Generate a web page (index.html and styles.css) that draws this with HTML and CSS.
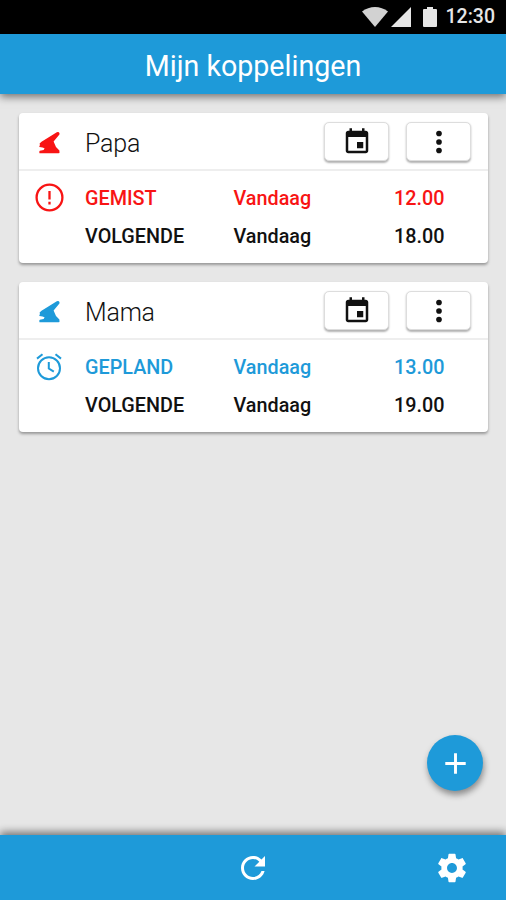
FILE: index.html
```html
<!doctype html>
<html lang="nl">
  <head>
    <meta charset="utf-8" />
    <title>Mijn koppelingen</title>
    <link rel="stylesheet" href="styles.css">
  </head>

  <body>
    <div class="statusbar">
      <svg class="wifi" viewBox="0 0 26 20"><path d="M0 4.500C7.500-1.500 18.500-1.500 26 4.500L13 20z" /></svg>
      <svg class="signal" viewBox="0 0 20 20"><path d="M0 20L20 0v20z" /></svg>
      <svg class="battery" viewBox="0 0 14 20"><path d="M1 2h3V0h6v2h3q1 0 1 1v16q0 1-1 1H1q-1 0-1-1V3q0-1 1-1z" /></svg>
      <span class="clock">12:30</span>
    </div>

    <header class="header">
      <h1>Mijn koppelingen</h1>
    </header>

    <main class="content">
      <section class="card">
        <div class="card_header">
          <svg class="logo missed" viewBox="0 0 22 24"><path d="M18.800 2.300Q20.800 1.500 21.500 3.200Q21.800 4.500 20.600 5.500L15.600 11.500L18 17L21.400 20.500Q22 23.200 20.500 23.200H1.500Q.8 21.500 1.800 20.800L5.600 20L6.600 18.300L4.500 17.500L1.500 17Q.8 16 2 15.300L1.600 13.500L3.500 11.700Z" /></svg>
          <h2>Papa</h2>
          <button class="card_button">
            <svg class="icon_event" viewBox="0 0 24 24"><path d="M17 12h-5v5h5v-5zM16 1v2H8V1H6v2H5c-1.110 0-1.990.9-1.990 2L3 19c0 1.100.89 2 2 2h14c1.100 0 2-.9 2-2V5c0-1.100-.9-2-2-2h-1V1h-2zm3 18H5V8h14v11z" /></svg>
          </button>
          <button class="card_button">
            <svg class="icon_more" viewBox="0 0 24 24"><circle cx="12" cy="6" r="2" /><circle cx="12" cy="12" r="2" /><circle cx="12" cy="18" r="2" /></svg>
          </button>
        </div>
        <div class="card_body">
          <div class="row missed">
            <svg class="icon_state" viewBox="0 0 30 30"><circle cx="14.500" cy="14.500" r="12.900" /><path d="M14.500 8v8.500M14.500 18.800v2.700" /></svg>
            <span>GEMIST</span>
            <span>Vandaag</span>
            <span class="time">12.00</span>
          </div>
          <div class="row">
            <span class="label">VOLGENDE</span>
            <span>Vandaag</span>
            <span class="time">18.00</span>
          </div>
        </div>
      </section>

      <section class="card">
        <div class="card_header">
          <svg class="logo planned" viewBox="0 0 22 24"><path d="M18.800 2.300Q20.800 1.500 21.500 3.200Q21.800 4.500 20.600 5.500L15.600 11.500L18 17L21.400 20.500Q22 23.200 20.500 23.200H1.500Q.8 21.500 1.800 20.800L5.600 20L6.600 18.300L4.500 17.500L1.500 17Q.8 16 2 15.300L1.600 13.500L3.500 11.700Z" /></svg>
          <h2>Mama</h2>
          <button class="card_button">
            <svg class="icon_event" viewBox="0 0 24 24"><path d="M17 12h-5v5h5v-5zM16 1v2H8V1H6v2H5c-1.110 0-1.990.9-1.990 2L3 19c0 1.100.89 2 2 2h14c1.100 0 2-.9 2-2V5c0-1.100-.9-2-2-2h-1V1h-2zm3 18H5V8h14v11z" /></svg>
          </button>
          <button class="card_button">
            <svg class="icon_more" viewBox="0 0 24 24"><circle cx="12" cy="6" r="2" /><circle cx="12" cy="12" r="2" /><circle cx="12" cy="18" r="2" /></svg>
          </button>
        </div>
        <div class="card_body">
          <div class="row planned">
            <svg class="icon_state alarm" viewBox="0 0 30 30"><circle cx="14" cy="16.300" r="11" /><path d="M13.800 10v6.500l5 3.200M2 6.600L7.500 2.200M20.500 2.200l5.500 4.400" /></svg>
            <span>GEPLAND</span>
            <span>Vandaag</span>
            <span class="time">13.00</span>
          </div>
          <div class="row">
            <span class="label">VOLGENDE</span>
            <span>Vandaag</span>
            <span class="time">19.00</span>
          </div>
        </div>
      </section>
    </main>

    <button class="fab">
      <svg viewBox="0 0 24 24"><path d="M19 13h-6v6h-2v-6H5v-2h6V5h2v6h6v2z" /></svg>
    </button>

    <footer class="footer">
      <span></span>
      <svg class="icon_refresh" viewBox="0 0 24 24"><path d="M17.650 6.350C16.200 4.900 14.210 4 12 4c-4.420 0-7.990 3.580-7.990 8s3.570 8 7.990 8c3.730 0 6.840-2.550 7.730-6h-2.080c-.82 2.330-3.040 4-5.650 4-3.310 0-6-2.690-6-6s2.690-6 6-6c1.660 0 3.140.69 4.220 1.780L13 11h7V4l-2.350 2.350z" /></svg>
      <svg class="icon_settings" viewBox="0 0 24 24"><path d="M19.430 12.980c.04-.32.07-.64.07-.98s-.03-.66-.07-.98l2.110-1.650c.19-.15.24-.42.12-.64l-2-3.460c-.12-.22-.39-.3-.61-.22l-2.490 1c-.52-.4-1.080-.73-1.690-.98l-.38-2.650C14.460 2.180 14.250 2 14 2h-4c-.25 0-.46.18-.49.42l-.38 2.650c-.61.25-1.170.59-1.690.98l-2.490-1c-.23-.09-.49 0-.61.22l-2 3.460c-.13.22-.07.49.12.64l2.110 1.650c-.04.32-.07.65-.07.98s.03.66.07.98l-2.110 1.650c-.19.15-.24.42-.12.64l2 3.460c.12.22.39.3.61.22l2.490-1c.52.4 1.080.73 1.690.98l.38 2.650c.03.24.24.42.49.42h4c.25 0 .46-.18.49-.42l.38-2.650c.61-.25 1.170-.59 1.690-.98l2.490 1c.23.09.49 0 .61-.22l2-3.460c.12-.22.07-.49-.12-.64l-2.110-1.650zM12 15.500c-1.930 0-3.500-1.570-3.500-3.500s1.570-3.500 3.500-3.500 3.500 1.570 3.500 3.500-1.570 3.500-3.500 3.500z" /></svg>
    </footer>
  </body>
</html>
```
FILE: styles.css
```css
* {
  box-sizing: border-box;
}

body {
  display: flex;
  flex-direction: column;
  height: 100vh;
  margin: 0;
  overflow: hidden;
  background-color: #e7e7e7;
  font-family: Roboto, sans-serif;
}

svg {
  display: block;
  flex: none;
  fill: currentColor;
}

.statusbar {
  display: flex;
  flex: none;
  align-items: center;
  justify-content: flex-end;
  height: 34px;
  padding-right: 11px;
  background-color: #000;
  color: #e6e6e6;
}

.wifi {
  width: 26px;
  height: 20px;
  margin-right: 3px;
  color: #d2d2d2;
}

.signal {
  width: 20px;
  height: 20px;
  margin-right: 12px;
}

.battery {
  width: 14px;
  height: 20px;
  margin-right: 9px;
}

.clock {
  font-size: 19.500px;
  font-weight: 500;
  line-height: 36px;
}

.header {
  display: flex;
  flex: none;
  align-items: center;
  justify-content: center;
  height: 60px;
  padding-top: 4px;
  background-color: #1e9ad9;
  box-shadow: 0 3px 8px rgba(0, 0, 0, 0.5);
  color: #fff;
}

h1 {
  margin: 0;
  font-size: 28.600px;
  font-weight: 400;
}

.content {
  display: flex;
  flex: 1;
  flex-direction: column;
  gap: 19px;
  padding: 19px 18px 0 19px;
}

.card {
  height: 150px;
  border-radius: 4px;
  background-color: #fff;
  box-shadow: 0 2px 3px rgba(0, 0, 0, 0.35);
}

.card_header {
  display: flex;
  align-items: center;
  height: 58px;
  padding: 1px 17px 0 19px;
  border-bottom: 2px solid #eee;
}

.logo {
  width: 22px;
  height: 24px;
}

h2 {
  flex: 1;
  margin: 3px 0 0 25px;
  color: #111;
  font-size: 25px;
  font-weight: 300;
  letter-spacing: -0.200px;
}

.card_button {
  display: flex;
  align-items: center;
  justify-content: center;
  width: 65px;
  height: 39px;
  margin-left: 17px;
  padding: 0;
  border: 1px solid #ddd;
  border-radius: 5px;
  background-color: #fff;
  box-shadow: 0 1.500px 2px rgba(0, 0, 0, 0.3);
  color: #111;
}

.icon_event {
  width: 30px;
  height: 30px;
}

.icon_more {
  width: 34px;
  height: 34px;
}

.card_body {
  padding-top: 8px;
}

.row {
  display: grid;
  grid-template-columns: 50px 148.500px 121px 90px;
  align-items: center;
  height: 38.500px;
  padding-left: 16px;
  color: #111;
  font-size: 19.800px;
  font-weight: 500;
}

.row .label {
  grid-column: 2;
}

.time {
  text-align: right;
}

.missed {
  color: #f81414;
}

.planned {
  color: #1e9ad9;
}

.icon_state {
  width: 30px;
  height: 30px;
  fill: none;
  stroke: currentColor;
  stroke-width: 2.300;
}

.alarm {
  stroke-width: 2;
}

.fab {
  position: absolute;
  right: 23px;
  bottom: 109px;
  display: flex;
  align-items: center;
  justify-content: center;
  width: 56px;
  height: 56px;
  padding: 0;
  border: none;
  border-radius: 50%;
  background-color: #1e9ad9;
  box-shadow: 1px 4px 6px rgba(0, 0, 0, 0.4);
  color: #fff;
}

.fab svg {
  width: 35px;
  height: 35px;
}

.footer {
  display: grid;
  flex: none;
  grid-template-columns: 1fr 36px 1fr;
  align-items: center;
  height: 65px;
  background-color: #1e9ad9;
  box-shadow: 0 -3px 8px rgba(0, 0, 0, 0.5);
  color: #fff;
}

.icon_refresh {
  width: 36px;
  height: 36px;
}

.icon_settings {
  width: 34px;
  height: 34px;
  margin-right: 37px;
  justify-self: end;
}
```
